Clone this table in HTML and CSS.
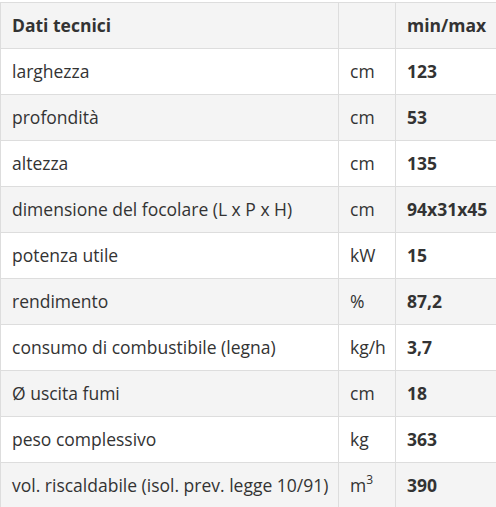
FILE: index.html
```html
<!DOCTYPE html>
<html lang="it">
<head>
<meta charset="utf-8">
<link rel="stylesheet" href="styles.css">
</head>
<body>
<table class="spec">
  <colgroup><col class="c1"><col class="c2"><col class="c3"></colgroup>
  <thead>
    <tr><th>Dati tecnici</th><th></th><th>min/max</th></tr>
  </thead>
  <tbody>
    <tr><td>larghezza</td><td>cm</td><td class="v">123</td></tr>
    <tr><td>profondità</td><td>cm</td><td class="v">53</td></tr>
    <tr><td>altezza</td><td>cm</td><td class="v">135</td></tr>
    <tr><td>dimensione del focolare (L x P x H)</td><td>cm</td><td class="v">94x31x45</td></tr>
    <tr><td>potenza utile</td><td>kW</td><td class="v">15</td></tr>
    <tr><td>rendimento</td><td>%</td><td class="v">87,2</td></tr>
    <tr><td>consumo di combustibile (legna)</td><td>kg/h</td><td class="v">3,7</td></tr>
    <tr><td>Ø uscita fumi</td><td>cm</td><td class="v">18</td></tr>
    <tr><td>peso complessivo</td><td>kg</td><td class="v">363</td></tr>
    <tr><td>vol. riscaldabile (isol. prev. legge 10/91)</td><td>m<sup>3</sup></td><td class="v">390</td></tr>
  </tbody>
</table>
</body>
</html>
```
FILE: styles.css
```css
html, body { margin: 0; padding: 0; background: #fff; }
body { padding-top: 2px; font-family: "Open Sans", sans-serif; font-size: 17.5px; color: #333; }
.spec { border-collapse: collapse; width: 497px; table-layout: fixed; }
.c1 { width: 338px; }
.c2 { width: 57px; }
.c3 { width: 102px; }
.spec th, .spec td {
  border: 1px solid #ddd;
  padding: 11px 10px 11px 11px;
  line-height: 23px;
  text-align: left;
  white-space: nowrap;
  vertical-align: middle;
}
.spec th { font-weight: 700; background: #f4f4f4; }
.spec td.v { font-weight: 700; }
.spec tbody tr:nth-child(even) td { background: #f4f4f4; }
.spec sup { font-size: 12px; line-height: 0; vertical-align: 8px; }
```
